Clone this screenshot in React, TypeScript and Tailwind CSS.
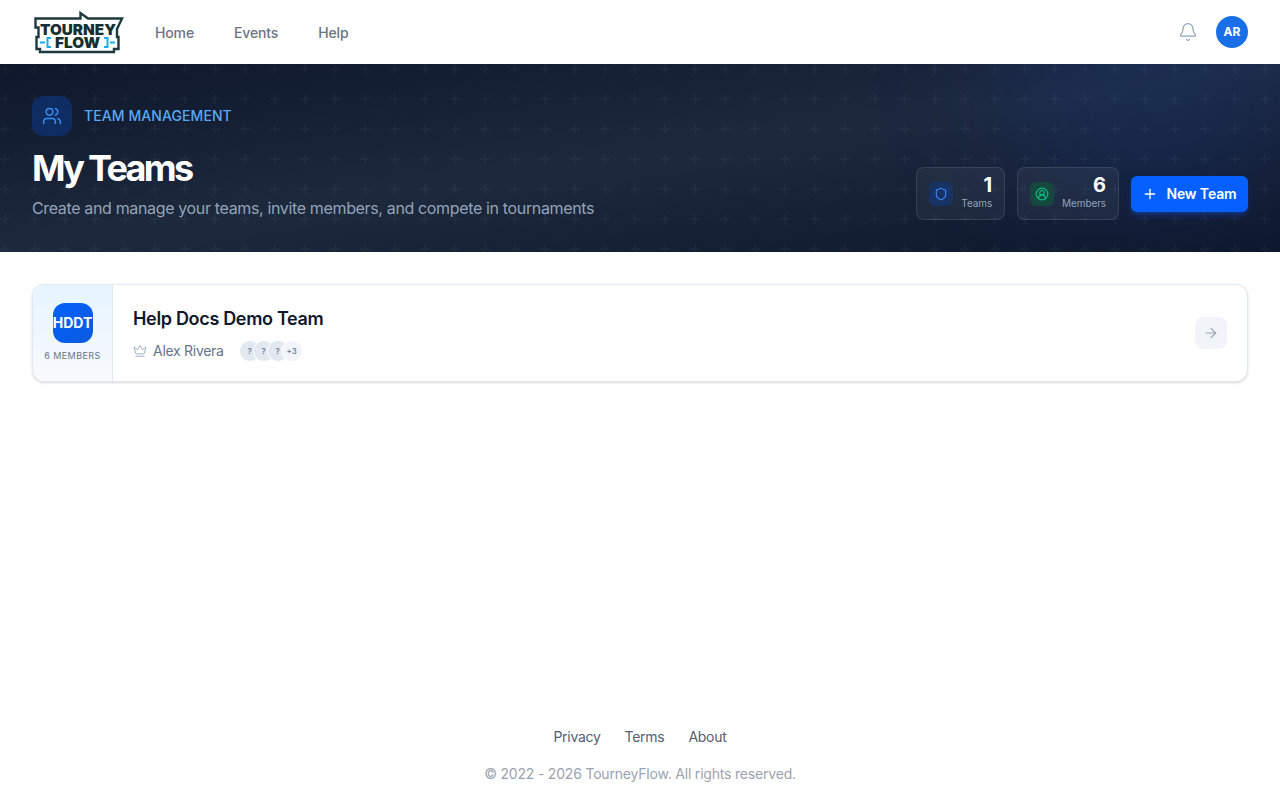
import { ArrowRight, Bell, CircleUserRound, Crown, Plus, Shield, Users } from 'lucide-react'

const navLinks = ['Home', 'Events', 'Help']
const footerLinks = ['Privacy', 'Terms', 'About']

function Logo() {
  return (
    <svg width="92" height="44" viewBox="0 0 92 44" className="shrink-0">
      <path
        d="M3.500 8.500H48.500V3L56 8.500H90L85 19V27H86.500V39H82V42H8V39H4.500V27H6.500V17.500H3.500Z"
        fill="#fff"
        stroke="#1d3b3f"
        strokeWidth="2.400"
        strokeLinejoin="miter"
      />
      <text x="8" y="25" textLength="76" lengthAdjust="spacingAndGlyphs" fontFamily="Inter, sans-serif" fontWeight="900" fontSize="15" fill="#17302f">
        TOURNEY
      </text>
      <text x="23" y="38" textLength="45" lengthAdjust="spacingAndGlyphs" fontFamily="Inter, sans-serif" fontWeight="900" fontSize="15" fill="#17302f">
        FLOW
      </text>
      <path d="M8 32.500H13M19 28H15.500V37H19" fill="none" stroke="#19aeea" strokeWidth="2" />
      <path d="M83 32.500H78M72 28H75.500V37H72" fill="none" stroke="#19aeea" strokeWidth="2" />
    </svg>
  )
}

function PlusPattern() {
  return (
    <svg className="absolute inset-0 w-full h-full" aria-hidden="true">
      <defs>
        <pattern id="plus" width="30" height="30" patternUnits="userSpaceOnUse">
          <path d="M6 4V0H4v4H0v2h4v4h2V6h4V4H6z" fill="#fff" fillOpacity="0.03" />
        </pattern>
      </defs>
      <rect width="100%" height="100%" fill="url(#plus)" />
    </svg>
  )
}

export default function App() {
  return (
    <div className="min-h-screen flex flex-col bg-white font-['Inter',sans-serif]">
      <header className="h-16 flex items-center justify-between px-8 bg-white">
        <div className="flex items-center">
          <Logo />
          <nav className="flex items-center gap-10 ml-[31px] mt-[2px]">
            {navLinks.map((link) => (
              <a key={link} className="text-sm font-medium tracking-[-0.01em] text-[#6b7280]">{link}</a>
            ))}
          </nav>
        </div>
        <div className="flex items-center gap-[18px]">
          <Bell size={20} strokeWidth={1.5} className="text-[#94a3b8]" />
          <div className="w-8 h-8 rounded-full bg-[#1a6fe8] flex items-center justify-center text-xs font-bold text-white">AR</div>
        </div>
      </header>

      <section className="relative h-[188px] overflow-hidden bg-gradient-to-br from-slate-900 via-slate-800 to-slate-900">
        <div className="absolute -top-40 -right-8 w-80 h-80 rounded-full bg-blue-600/10 blur-3xl" />
        <PlusPattern />
        <div className="relative h-full flex items-end justify-between px-8 pb-8">
          <div>
            <div className="flex items-center gap-3">
              <div className="w-10 h-10 rounded-xl bg-[#0f2d63] flex items-center justify-center">
                <Users size={20} strokeWidth={1.75} className="text-[#3b8bf0]" />
              </div>
              <span className="text-sm font-medium tracking-[0.006em] text-[#5aa9f8]">TEAM MANAGEMENT</span>
            </div>
            <h1 className="mt-2 text-4xl leading-[48px] font-bold tracking-[-0.075em] text-white">My Teams</h1>
            <p className="mt-1 text-base leading-6 tracking-[-0.022em] text-[#94a3b8]">Create and manage your teams, invite members, and compete in tournaments</p>
          </div>
          <div className="flex items-center gap-3">
            <div className="h-[53px] flex items-center gap-2 pl-[12px] pr-3 rounded-lg border border-white/10 bg-white/5">
              <div className="w-6 h-6 rounded-md bg-[#173264] flex items-center justify-center">
                <Shield size={14} className="text-[#3b82f6]" />
              </div>
              <div className="text-right -mt-[3px]">
                <div className="text-xl leading-[22px] font-bold text-white">1</div>
                <div className="text-[10px] leading-[14px] tracking-[-0.01em] text-[#94a3b8]">Teams</div>
              </div>
            </div>
            <div className="h-[53px] flex items-center gap-2 pl-[12px] pr-3 rounded-lg border border-white/10 bg-white/5">
              <div className="w-6 h-6 rounded-md bg-[#15483f] flex items-center justify-center">
                <CircleUserRound size={14} className="text-[#10b981]" />
              </div>
              <div className="text-right -mt-[3px]">
                <div className="text-xl leading-[22px] font-bold text-white">6</div>
                <div className="text-[10px] leading-[14px] tracking-[-0.01em] text-[#94a3b8]">Members</div>
              </div>
            </div>
            <button className="h-9 w-[117px] flex items-center justify-center gap-2 rounded-md bg-[#0560fd] text-sm font-semibold tracking-[-0.01em] text-white shadow-md shadow-blue-600/30">
              <Plus size={16} />
              New Team
            </button>
          </div>
        </div>
      </section>

      <main className="flex-1 px-8 pt-8">
        <div className="flex h-[98px] rounded-xl border border-[#e2e8f0] bg-white shadow-[0_1px_3px_rgba(0,0,0,0.1),0_1px_2px_rgba(0,0,0,0.06)] overflow-hidden">
          <div className="w-20 shrink-0 flex flex-col items-center justify-center gap-[7px] pb-[1px] border-r border-[#e2e8f0] bg-gradient-to-b from-[#e6f4ff] to-[#f8fafc]">
            <div className="w-10 h-10 rounded-xl bg-gradient-to-br from-[#0560fd] to-[#0a5bdc] flex items-center justify-center text-sm font-bold text-white">HDDT</div>
            <span className="text-[9px] leading-3 font-normal tracking-wider text-[#64748b]">6 MEMBERS</span>
          </div>
          <div className="flex-1 flex items-center justify-between pl-5 pr-5">
            <div>
              <h3 className="text-lg leading-7 font-semibold tracking-[-0.018em] text-[#0f172a]">Help Docs Demo Team</h3>
              <div className="mt-2 flex items-center h-5">
                <Crown size={14} strokeWidth={1.5} className="text-[#94a3b8]" />
                <span className="ml-1.5 text-sm tracking-[-0.02em] text-[#64748b]">Alex Rivera</span>
                <div className="ml-[15px] flex -space-x-2">
                  {['?', '?', '?'].map((q, i) => (
                    <div key={i} className="w-[22px] h-[22px] rounded-full bg-[#e2e8f0] border border-white flex items-center justify-center text-[8px] font-medium text-[#64748b]">{q}</div>
                  ))}
                  <div className="w-[22px] h-[22px] rounded-full bg-[#f1f5f9] border border-white flex items-center justify-center text-[8px] font-medium text-[#64748b]">+3</div>
                </div>
              </div>
            </div>
            <div className="w-8 h-8 rounded-lg bg-[#f1f5f9] flex items-center justify-center">
              <ArrowRight size={16} strokeWidth={1.75} className="text-[#94a3b8]" />
            </div>
          </div>
        </div>
      </main>

      <footer className="h-[73px] flex flex-col items-center">
        <div className="flex items-center gap-6">
          {footerLinks.map((link) => (
            <a key={link} className="text-sm leading-5 tracking-[-0.02em] text-[#566070]">{link}</a>
          ))}
        </div>
        <p className="mt-[17px] text-sm leading-5 tracking-[-0.014em] text-[#9ca3af]">© 2022 - 2026 TourneyFlow. All rights reserved.</p>
      </footer>
    </div>
  )
}
